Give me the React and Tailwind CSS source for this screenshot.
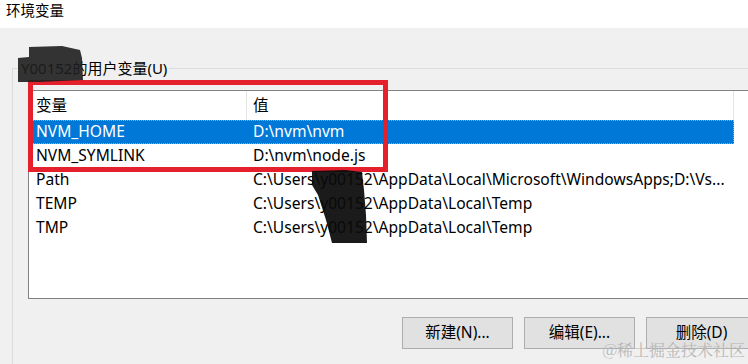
import React from "react";

const rows = [
  { name: "NVM_HOME", value: "D:\\nvm\\nvm", selected: true },
  { name: "NVM_SYMLINK", value: "D:\\nvm\\node.js" },
  { name: "Path", value: "C:\\Users\\y00152\\AppData\\Local\\Microsoft\\WindowsApps;D:\\Vs..." },
  { name: "TEMP", value: "C:\\Users\\y00152\\AppData\\Local\\Temp" },
  { name: "TMP", value: "C:\\Users\\y00152\\AppData\\Local\\Temp" },
];

const font = { fontFamily: '"Noto Sans", "Noto Sans CJK SC", sans-serif' };

export default function App() {
  return (
    <div
      className="relative w-[748px] h-[364px] overflow-hidden bg-[#f0f0f0] text-black"
      style={font}
    >
      <div className="h-[28px] bg-white pl-[6px] text-[14.5px] leading-[20px]">环境变量</div>

      <div className="pl-[12px] pt-[40px]">
        <div className="relative h-[296px] border-l border-t border-[#dcdcdc]">
          <div className="absolute left-[6px] top-[-11px] bg-[#f0f0f0] px-[2px] text-[15px] leading-[20px]">
            Y00152的用户变量(U)
          </div>

          <div className="pl-[15px] pt-[21px]">
            <div className="w-[740px] h-[209px] border border-[#828282] bg-white text-[15.6px]">
              <div className="flex h-[29px] items-center">
                <div className="w-[218px] h-full flex items-center pl-[7px] border-r border-[#e5e5e5]">变量</div>
                <div className="w-[487px] h-full flex items-center pl-[6px] border-r border-[#e5e5e5]">值</div>
              </div>
              {rows.map((r) => (
                <div
                  key={r.name}
                  className={
                    r.selected
                      ? "flex h-[24px] w-[705px] items-center bg-[#0078d7] text-white outline-1 outline-dotted outline-offset-[-1px] outline-[#7fb4e6]"
                      : "flex h-[24px] w-[705px] items-center"
                  }
                >
                  <div className="w-[218px] pl-[7px] whitespace-nowrap">{r.name}</div>
                  <div className="w-[487px] pl-[6px] whitespace-nowrap">{r.value}</div>
                </div>
              ))}
            </div>
          </div>

          <div className="flex gap-[11px] pl-[389px] pt-[18px] text-[15.5px]">
            <button className="w-[111px] h-[32px] shrink-0 border border-[#adadad] bg-[#e1e1e1]">新建(N)...</button>
            <button className="w-[111px] h-[32px] shrink-0 border border-[#adadad] bg-[#e1e1e1]">编辑(E)...</button>
            <button className="w-[111px] h-[32px] shrink-0 border border-[#adadad] bg-[#e1e1e1]">删除(D)</button>
          </div>
        </div>
      </div>

      {/* red annotation box */}
      <div className="absolute left-[28px] top-[80px] w-[360px] h-[92px] border-[5px] border-[#e3202b]" />

      {/* redaction scribbles */}
      <svg className="absolute left-0 top-0 z-10" width="748" height="364" viewBox="0 0 748 364">
        <polygon
          points="29,47 62,46 80,50 82,58 83,80 60,81 40,82 18,82 18,58 29,57"
          fill="#1e1e1e"
          fillOpacity="0.9"
        />
        <polygon
          points="312,171 345,170 362,172 364,190 366,215 367,243 332,243 326,220 318,195 312,185"
          fill="#0a0a0a"
          fillOpacity="0.93"
        />
      </svg>

      <div
        className="absolute right-[3px] bottom-[4px] z-20 text-[16px] leading-[20px] text-[#b8b8b8]"
        style={{ fontFamily: '"Noto Serif CJK SC", "Noto Sans CJK SC", serif' }}
      >
        @稀土掘金技术社区
      </div>
    </div>
  );
}
